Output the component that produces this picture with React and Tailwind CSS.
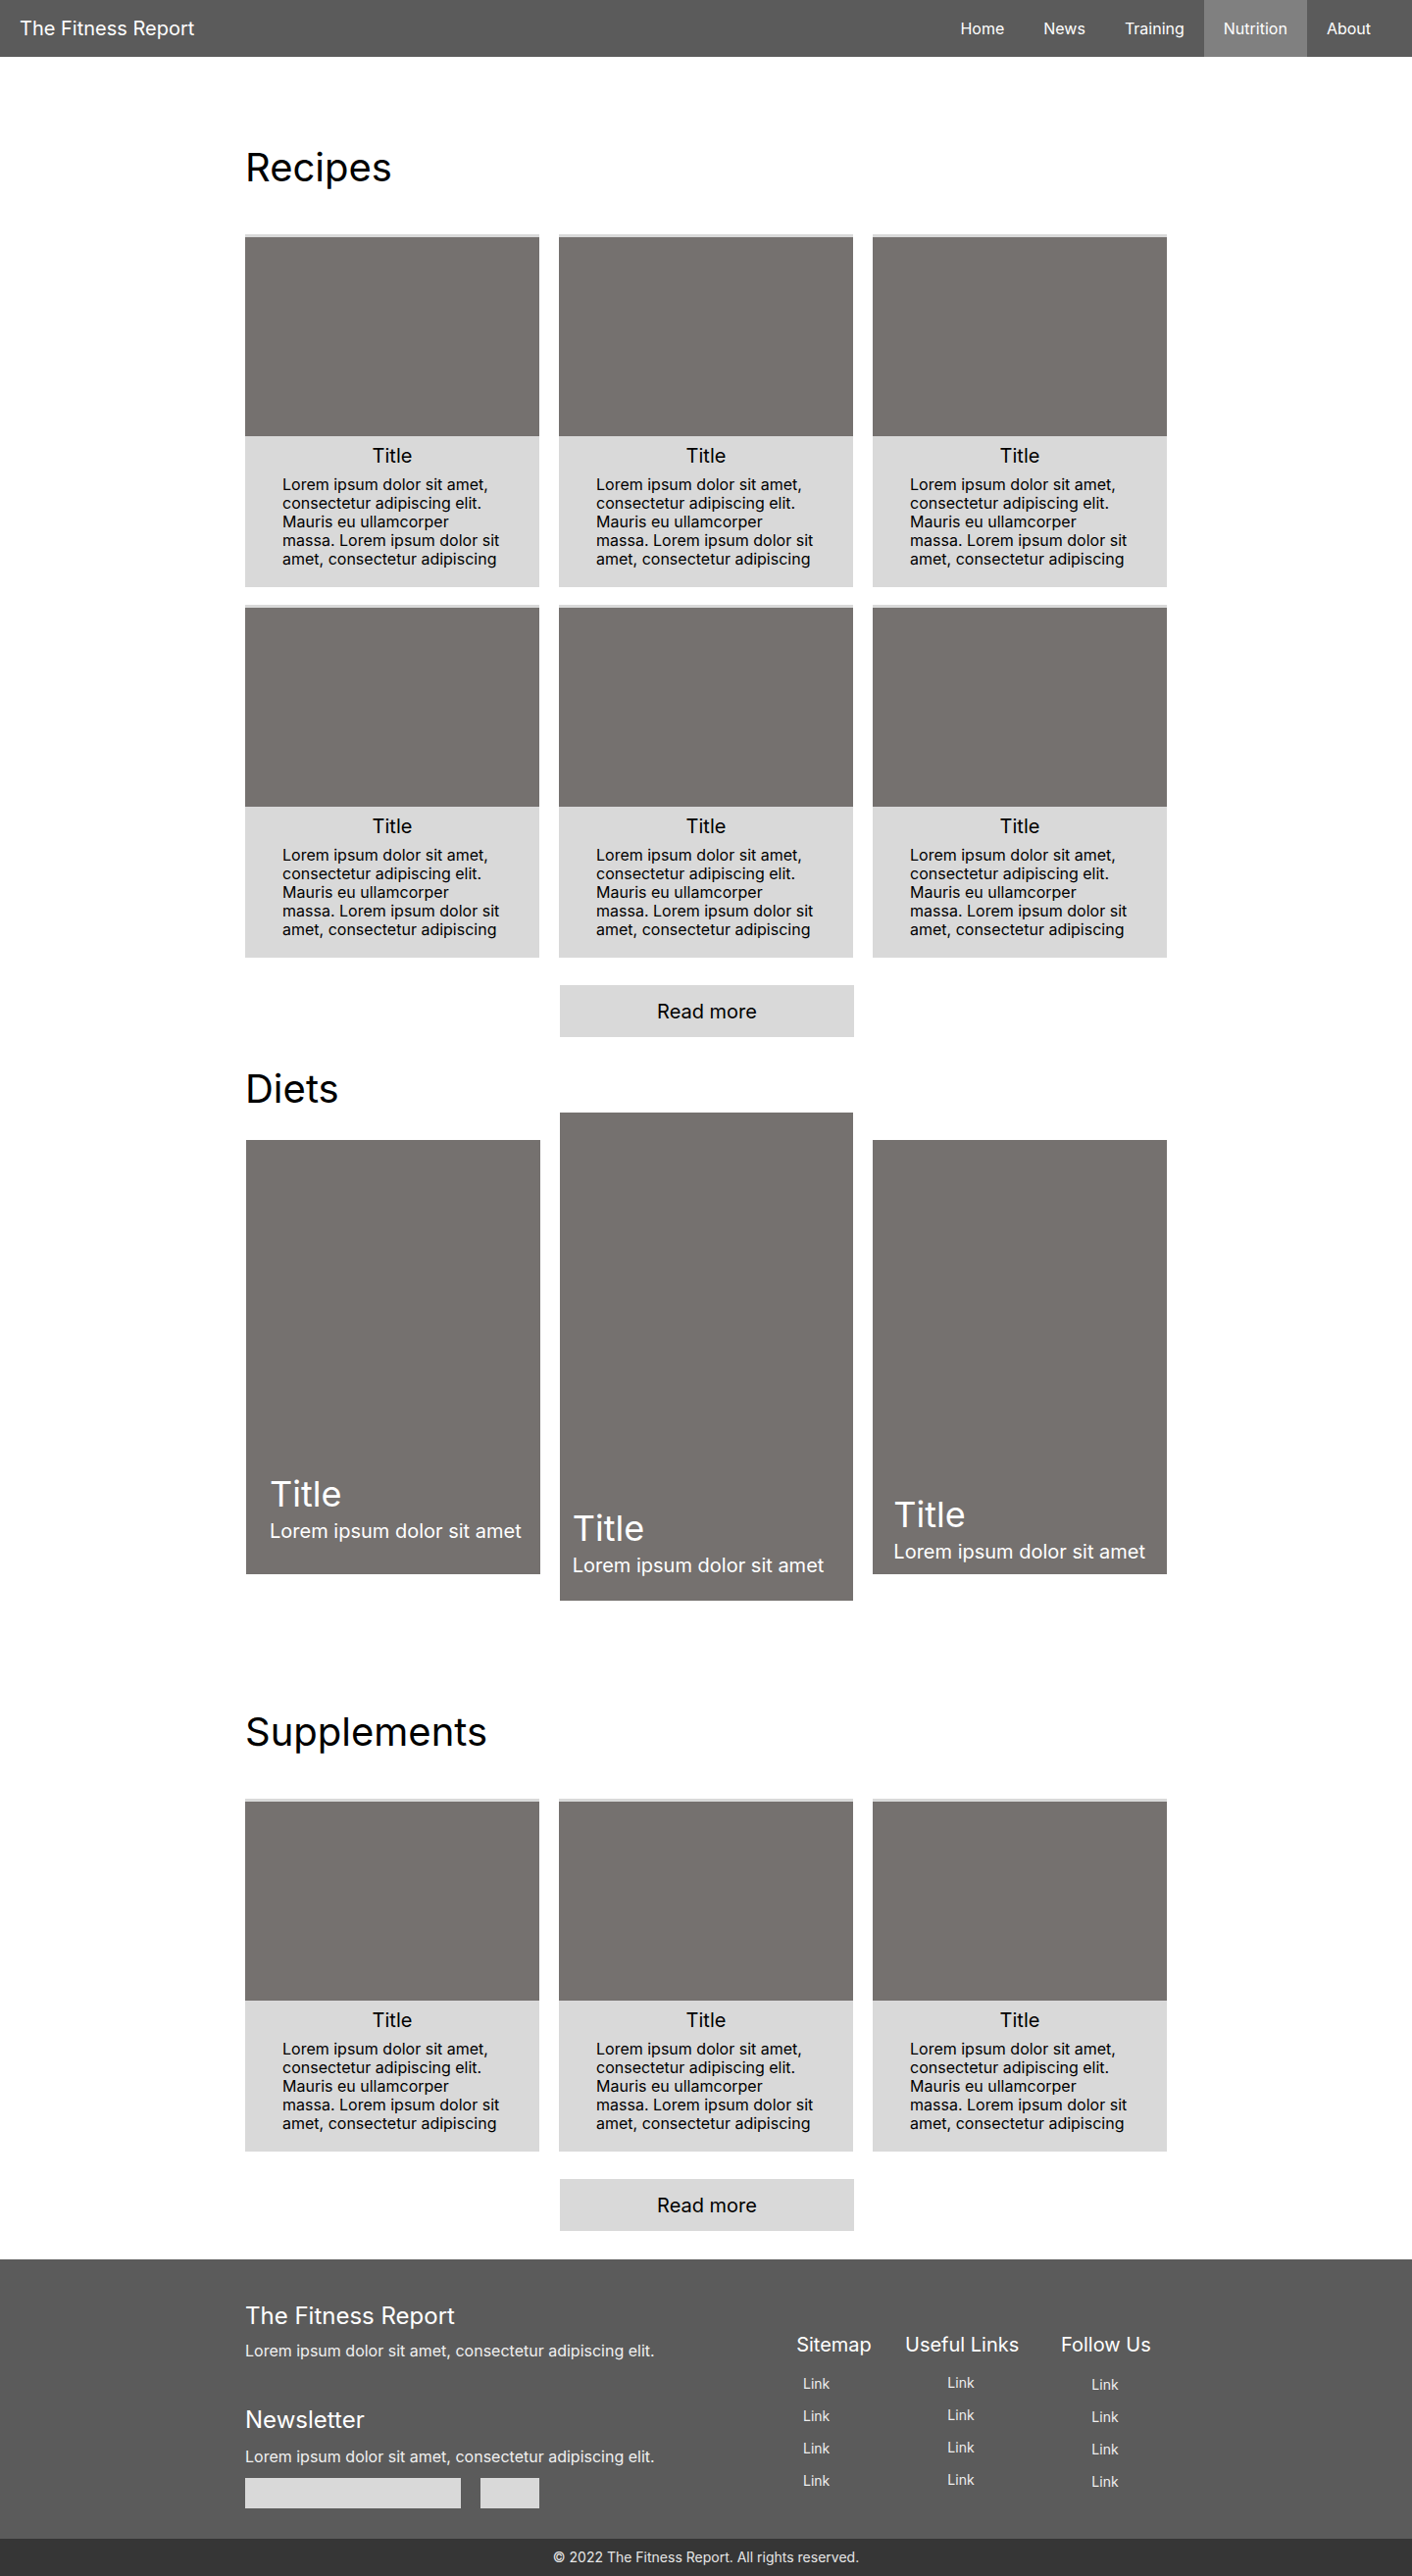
import React from "react";

const navLinks = ["Home", "News", "Training", "Nutrition", "About"];

const loremLines = [
  "Lorem ipsum dolor sit amet,",
  "consectetur adipiscing elit.",
  "Mauris eu ullamcorper",
  "massa. Lorem ipsum dolor sit",
  "amet, consectetur adipiscing",
];

// diets cards: height + bottom padding differ per card (as in the mockup)
const diets = [
  { h: "h-[443px]", pad: "pl-6 pb-[30px]" },
  { h: "h-[498px]", pad: "pl-[13px] pb-[22px]" },
  { h: "h-[443px]", pad: "pl-[21px] pb-[9px]" },
];

function Navbar() {
  return (
    <header className="h-[58px] bg-[#5b5b5b] flex items-center justify-between pl-5 pr-[22px] text-white">
      <span className="text-xl leading-7">The Fitness Report</span>
      <nav className="flex h-full">
        {navLinks.map((l) => (
          <a
            key={l}
            className={`px-5 flex items-center text-base ${
              l === "Nutrition" ? "bg-[#808080]" : ""
            }`}
          >
            {l}
          </a>
        ))}
      </nav>
    </header>
  );
}

function InfoCard() {
  return (
    <div className="h-[360px] bg-[#d9d9d9] pt-[3px] overflow-hidden">
      <div className="h-[203px] bg-[#75716f]" />
      <div className="pt-2 text-center text-xl leading-6 text-black">Title</div>
      <p className="mt-2 pl-[38px] text-base leading-[19px] text-black whitespace-nowrap">
        {loremLines.map((line) => (
          <span key={line} className="block">
            {line}
          </span>
        ))}
      </p>
    </div>
  );
}

function SectionTitle({ children }) {
  return <h2 className="text-[40px] leading-[48px] text-black">{children}</h2>;
}

function ReadMore() {
  return (
    <button className="mt-7 ml-[321px] w-[300px] h-[53px] bg-[#d9d9d9] text-xl text-black">
      Read more
    </button>
  );
}

function Footer() {
  const cols = [
    { title: "Sitemap", w: "w-[77px]", ml: "", links: "items-start pl-[7px] mt-[9px]" },
    { title: "Useful Links", w: "w-[114px]", ml: "ml-[34px]", links: "items-center mt-[8px]" },
    { title: "Follow Us", w: "w-[90px]", ml: "ml-[45px]", links: "items-center mt-[10px]" },
  ];
  return (
    <footer>
      <div className="bg-[#5b5b5b] h-[285px]">
        <div className="w-[940px] mx-auto flex pt-[42px]">
          <div className="text-white">
            <h3 className="text-2xl leading-8">The Fitness Report</h3>
            <p className="mt-[7px] text-base leading-6 text-[#f0f0f0]">
              Lorem ipsum dolor sit amet, consectetur adipiscing elit.
            </p>
            <h3 className="mt-[43px] text-2xl leading-8">Newsletter</h3>
            <p className="mt-[9px] text-base leading-6 text-[#f0f0f0]">
              Lorem ipsum dolor sit amet, consectetur adipiscing elit.
            </p>
            <div className="mt-[10px] flex gap-5">
              <div className="w-[220px] h-[31px] bg-[#d9d9d9]" />
              <div className="w-[60px] h-[31px] bg-[#d9d9d9]" />
            </div>
          </div>
          <div className="ml-auto mr-[18px] mt-[31px] flex text-white">
            {cols.map((c) => (
              <div key={c.title} className={`${c.w} ${c.ml} flex flex-col`}>
                <h4 className="text-xl leading-7 text-center whitespace-nowrap">{c.title}</h4>
                <ul className={`flex flex-col ${c.links}`}>
                  {[1, 2, 3, 4].map((i) => (
                    <li key={i} className="text-sm leading-[33px] text-[#eeeeee]">
                      Link
                    </li>
                  ))}
                </ul>
              </div>
            ))}
          </div>
        </div>
      </div>
      <div className="h-[38px] bg-[#363636] flex items-center justify-center text-sm text-[#e6e6e6]">
        © 2022 The Fitness Report. All rights reserved.
      </div>
    </footer>
  );
}

export default function App() {
  return (
    <div className="font-[Inter,sans-serif] bg-white min-h-[2628px]">
      <Navbar />
      <main className="w-[940px] mx-auto pt-[89px] pb-[29px]">
        {/* Recipes */}
        <SectionTitle>Recipes</SectionTitle>
        <div className="mt-11 grid grid-cols-3 gap-x-5 gap-y-[18px]">
          {[1, 2, 3, 4, 5, 6].map((i) => (
            <InfoCard key={i} />
          ))}
        </div>
        <ReadMore />

        {/* Diets */}
        <div className="mt-[29px]">
          <SectionTitle>Diets</SectionTitle>
        </div>
        <div className="ml-px flex items-center gap-5">
          {diets.map((d, i) => (
            <div
              key={i}
              className={`w-[300px] ${d.h} bg-[#75716f] flex flex-col justify-end text-white ${d.pad}`}
            >
              <span className="text-[36px] leading-10">Title</span>
              <span className="mt-1 text-xl leading-7">Lorem ipsum dolor sit amet</span>
            </div>
          ))}
        </div>

        {/* Supplements */}
        <div className="mt-[110px]">
          <SectionTitle>Supplements</SectionTitle>
        </div>
        <div className="mt-11 grid grid-cols-3 gap-5">
          {[1, 2, 3].map((i) => (
            <InfoCard key={i} />
          ))}
        </div>
        <ReadMore />
      </main>
      <Footer />
    </div>
  );
}
